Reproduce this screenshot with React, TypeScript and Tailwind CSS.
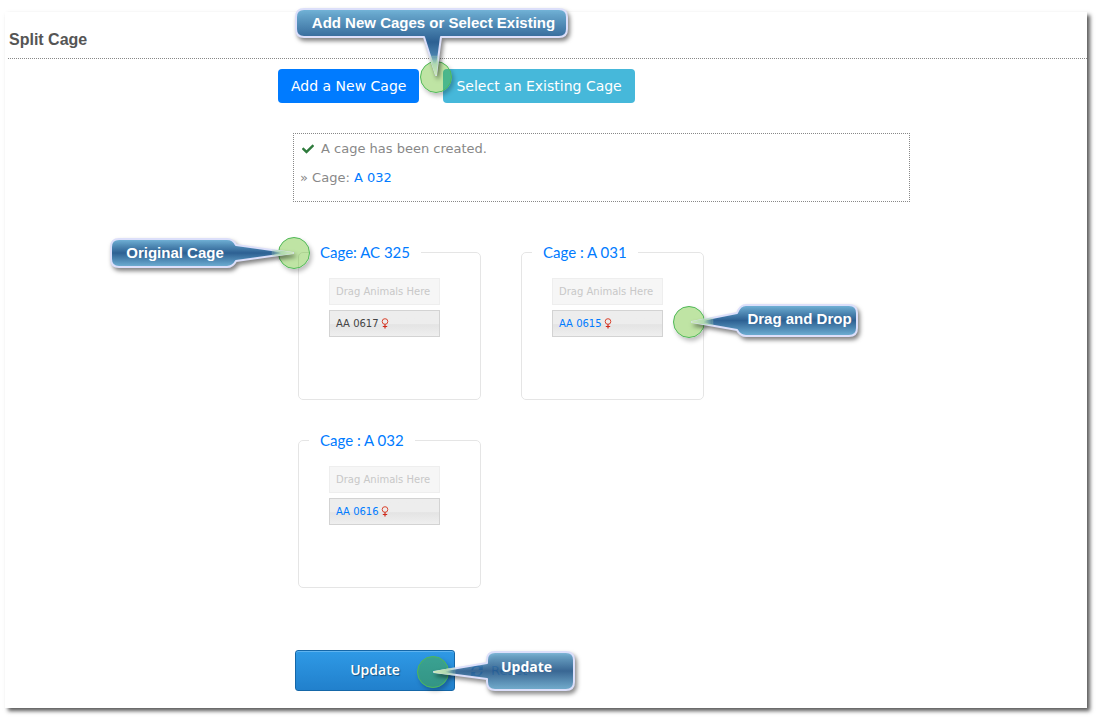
import { useId } from "react";
import type { ReactNode } from "react";
import { FaCheck, FaSyncAlt } from "react-icons/fa";

interface CalloutProps {
  label: string;
  place: string;
  text: string;
  spot: string;
  width: number;
  height: number;
  path: string;
  tip: { x1: number; y1: number; x2: number; y2: number };
  tipPath: string;
  opacity?: number;
}

function Callout({ label, place, text, spot, width, height, path, tip, tipPath, opacity = 0.97 }: CalloutProps) {
  const id = useId();
  return (
    <div className={`pointer-events-none absolute ${place}`}>
      <span
        className={`absolute size-8 rounded-full border border-[#4fb857] bg-[rgba(82,182,9,0.37)] shadow-[2px_3px_4px_rgba(0,0,0,0.25)] ${spot}`}
      />
      <svg
        className="relative block overflow-visible drop-shadow-[2px_3px_2px_rgba(0,0,0,0.5)]"
        width={width}
        height={height}
        viewBox={`0 0 ${width} ${height}`}
        aria-hidden="true"
      >
        <defs>
          <linearGradient id={`${id}b`} x1="0" y1="0" x2="0" y2="1">
            <stop offset="0" stopColor="#70b3d8" />
            <stop offset="0.5" stopColor="#2a5f93" />
            <stop offset="1" stopColor="#70b3d8" />
          </linearGradient>
          <linearGradient id={`${id}t`} gradientUnits="userSpaceOnUse" {...tip}>
            <stop offset="0" stopColor="#cdeabb" />
            <stop offset="0.5" stopColor="#b0d9b0" />
            <stop offset="1" stopColor="#a9d3b4" stopOpacity="0" />
          </linearGradient>
        </defs>
        <path
          d={path}
          fill={`url(#${id}b)`}
          fillOpacity={opacity}
          stroke="#dcdffa"
          strokeWidth="2"
          strokeLinejoin="round"
        />
        <path d={tipPath} fill={`url(#${id}t)`} stroke={`url(#${id}t)`} strokeWidth="1.5" />
      </svg>
      <span className={`absolute top-0 flex items-center justify-center font-bold whitespace-nowrap text-white ${text}`}>
        {label}
      </span>
    </div>
  );
}

function FemaleIcon() {
  return (
    <svg className="ml-0.5 inline-block" width="8" height="11" viewBox="0 0 8 11" aria-label="Female">
      <circle cx="4" cy="3.5" r="2.8" fill="none" stroke="#d9442f" strokeWidth="1" />
      <path d="M4 6.3V10.5M1.8 8.5H6.2" fill="none" stroke="#cf2a1c" strokeWidth="1.2" />
    </svg>
  );
}

function Cage({ name, children }: { name: string; children: ReactNode }) {
  return (
    <fieldset className="h-40 w-[183px] rounded-[5px] border border-[#e5e5e5] px-2.5">
      <legend className="px-[11px] font-['Lato',sans-serif] text-[15px] leading-6 text-[#007bff]">{name}</legend>
      <div className="mt-3.5 ml-5 flex w-[111px] flex-col gap-[5px] font-['DejaVu_Sans',sans-serif] text-[10px] whitespace-nowrap">
        <div className="flex h-[27px] items-center border border-[#eeeeee] bg-[#f6f6f6] px-1.5 text-[#c8c8c8]">
          Drag Animals Here
        </div>
        <div className="flex h-[27px] items-center border border-[#d3d3d3] bg-linear-to-b from-[#ededed] from-50% via-[#e4e4e4] via-55% to-[#efefef] px-1.5">
          {children}
          <FemaleIcon />
        </div>
      </div>
    </fieldset>
  );
}

export default function App() {
  return (
    <div className="bg-white pt-3 pr-[9px] pb-[9px] pl-[5px]">
      <main className="relative bg-white pb-[17px] font-['DejaVu_Sans',sans-serif] shadow-[3px_3px_4px_0_rgba(0,0,0,0.65)]">
        <header className="ml-[3px] border-b border-dotted border-[#888888] pt-4 pb-1.5">
          <h1 className="pl-px font-['Liberation_Sans',sans-serif] text-base font-bold text-[#555555]">Split Cage</h1>
        </header>

        <div className="mt-2.5 ml-[273px] flex gap-6 text-sm text-white">
          <button type="button" className="h-[34px] rounded bg-[#007bff] px-[13px]">Add a New Cage</button>
          <button type="button" className="h-[34px] rounded bg-[#46b8da] px-[13px]">Select an Existing Cage</button>
        </div>

        <section className="mt-[30px] mr-[177px] ml-[288px] h-[69px] border border-dotted border-[#888888] px-1.5 pt-[5px] text-[13px] leading-5 text-[#888888]">
          <p className="flex items-center gap-[7px] pl-0.5">
            <FaCheck className="size-3 text-[#2e7a3c]" />
            A cage has been created.
          </p>
          <p className="mt-[9px]">
            » Cage: <a href="#a032" className="text-[#007bff]">A 032</a>
          </p>
        </section>

        <form onSubmit={(e) => e.preventDefault()}>
          <div className="mt-[38px] ml-[293px] grid grid-cols-[max-content_max-content] gap-x-10 gap-y-7">
            <Cage name="Cage: AC 325">
              <span className="text-[#444444]">AA 0617</span>
            </Cage>
            <Cage name="Cage : A 031">
              <a href="#aa0615" className="text-[#007bff]">AA 0615</a>
            </Cage>
            <Cage name="Cage : A 032">
              <a href="#aa0616" className="text-[#007bff]">AA 0616</a>
            </Cage>
          </div>

          <div className="mt-[62px] ml-[290px] flex items-center gap-4">
            <button
              type="submit"
              className="h-[41px] w-40 rounded-[3px] border border-[#1567a8] bg-linear-to-b from-[#2f9ae6] to-[#2180cc] pb-0.5 font-['Open_Sans',sans-serif] text-sm font-semibold text-white shadow-[inset_0_1px_0_#5fb4f0] text-shadow-[1px_1px_1px_rgba(0,0,0,0.4)]"
            >
              Update
            </button>
            <button type="reset" className="flex items-center gap-2 text-[13px] text-[#007bff]">
              <FaSyncAlt className="size-3" />
              Reset
            </button>
          </div>
        </form>

        <Callout
          label="Add New Cages or Select Existing"
          place="top-[-4px] left-[290px]"
          text="left-0 h-[30px] w-[277px] font-['Liberation_Sans',sans-serif] text-[15px]"
          spot="top-[53px] left-[125px]"
          width={273}
          height={68}
          path="M9 1H264Q272 1 272 9V21Q272 29 264 29H146L141 67L129 29H9Q1 29 1 21V9Q1 1 9 1Z"
          tip={{ x1: 141, y1: 67, x2: 141, y2: 46 }}
          tipPath="M141 67L135 48H143Z"
        />
        <Callout
          label="Original Cage"
          place="top-[226px] left-[105px]"
          text="left-0 h-[30px] w-[130px] font-['Liberation_Sans',sans-serif] text-[15px]"
          spot="top-[-1px] left-[168px]"
          width={184}
          height={30}
          path="M9 1H117Q123 1 126 7L183 15L126 23Q123 29 117 29H9Q1 29 1 21V9Q1 1 9 1Z"
          tip={{ x1: 183, y1: 15, x2: 160, y2: 15 }}
          tipPath="M183 15L162 12V18Z"
        />
        <Callout
          label="Drag and Drop"
          place="top-[292px] left-[686px]"
          text="right-0 h-[30px] w-[119px] font-['Liberation_Sans',sans-serif] text-[15px]"
          spot="top-[2px] left-[-18px]"
          width={168}
          height={33}
          path="M55 1H158Q166 1 166 9V24Q166 32 158 32H55Q49 32 46 26L1 18L46 9Q49 1 55 1Z"
          tip={{ x1: 1, y1: 18, x2: 24, y2: 18 }}
          tipPath="M1 18L22 14V21Z"
        />
        <Callout
          label="Update"
          place="top-[639px] left-[428px]"
          text="right-0 h-8 w-[97px] font-['Open_Sans',sans-serif] text-sm"
          spot="top-[5px] left-[-16px]"
          width={142}
          height={40}
          path="M62 1H133Q141 1 141 9V31Q141 39 133 39H62Q54 39 54 31V28L1 21L54 12V9Q54 1 62 1Z"
          tip={{ x1: 1, y1: 21, x2: 24, y2: 21 }}
          tipPath="M1 21L22 17V24Z"
          opacity={0.86}
        />
      </main>
    </div>
  );
}
